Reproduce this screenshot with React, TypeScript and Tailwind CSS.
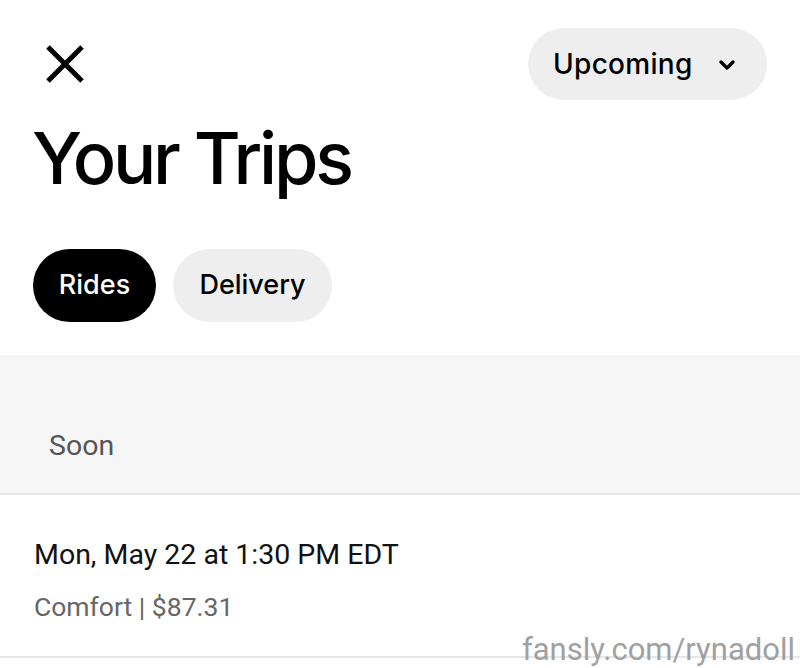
import React from "react";

export default function App() {
  return (
    <div className="relative w-[800px] h-[668px] overflow-hidden bg-white" style={{ fontFamily: "Inter, 'Noto Sans', sans-serif" }}>
      <div className="flex items-center justify-between pl-[46px] pr-[33px] pt-[28px] h-[100px]">
        <svg width="38" height="38" viewBox="0 0 38 38" className="block">
          <path d="M2 2 L36 36 M36 2 L2 36" stroke="#000" strokeWidth="5" strokeLinecap="butt" />
        </svg>
        <div className="flex items-center h-[72px] w-[239px] rounded-full bg-[#eeeeee] pl-[25px]">
          <span className="text-[28px] font-medium text-black tracking-[0.3px]">Upcoming</span>
          <svg width="16" height="10" viewBox="0 0 16 10" className="ml-[26px] mt-[2px]">
            <path d="M2 2 L8 8 L14 2" stroke="#000" strokeWidth="3.2" fill="none" strokeLinecap="round" strokeLinejoin="round" />
          </svg>
        </div>
      </div>
      <h1 className="mt-[22px] pl-[32px] text-[72px] leading-[72px] font-medium text-black tracking-[-3.2px]">Your Trips</h1>
      <div className="flex gap-[17px] pl-[33px] mt-[55px]">
        <div className="h-[73px] w-[123px] rounded-full bg-black text-white flex items-center justify-center text-[27px] font-medium">Rides</div>
        <div className="h-[73px] w-[159px] rounded-full bg-[#eeeeee] text-black flex items-center justify-center text-[27px] font-medium">Delivery</div>
      </div>
      <div className="mt-[33px] h-[140px] bg-[#f6f6f6] border-b-2 border-[#e6e6e6] flex items-end pl-[49px] pb-[29px]" style={{ fontFamily: "Roboto, sans-serif" }}>
        <span className="text-[28.5px] text-[#555555] leading-[36px]">Soon</span>
      </div>
      <div className="pl-[34px] pt-[42px]" style={{ fontFamily: "Roboto, sans-serif" }}>
        <div className="text-[28.5px] leading-[36px] text-[#111111]">Mon, May 22 at 1:30 PM EDT</div>
        <div className="mt-[17px] text-[26.5px] leading-[34px] text-[#666666]">Comfort | $87.31</div>
      </div>
      <div className="absolute left-0 right-0 top-[656px] h-[2px] bg-[#e6e6e6]" />
      <div className="absolute right-[5px] top-[630px] text-[31px] leading-[40px] text-[#a0a0a0]" style={{ fontFamily: "Roboto, sans-serif" }}>fansly.com/rynadoll</div>
    </div>
  );
}
